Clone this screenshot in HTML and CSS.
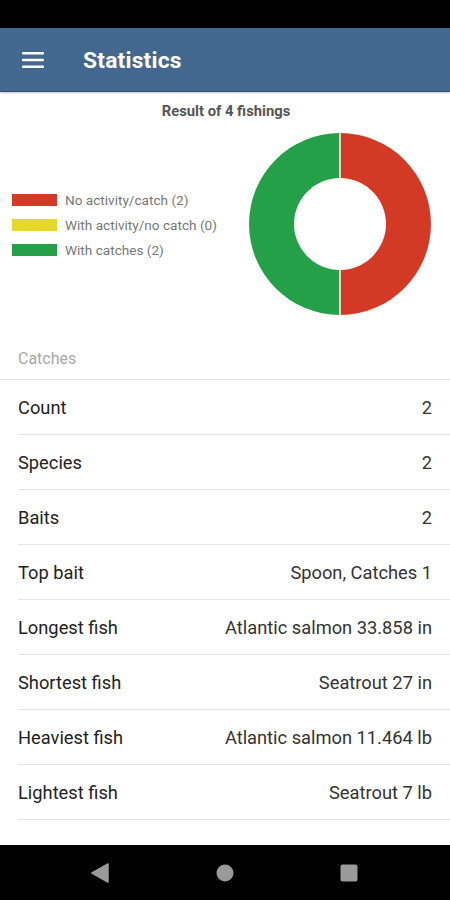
FILE: index.html
```html
<!DOCTYPE html>
<html>
<head>
<meta charset="utf-8">
<link rel="stylesheet" href="styles.css">
</head>
<body>
<div class="screen">
  <div class="statusbar"></div>
  <header class="appbar">
    <svg class="menu" width="22" height="16" viewBox="0 0 22 16"><rect x="0" y="0" width="22" height="2.6" rx="1" fill="#fff"/><rect x="0" y="6.7" width="22" height="2.6" rx="1" fill="#fff"/><rect x="0" y="13.4" width="22" height="2.6" rx="1" fill="#fff"/></svg>
    <h1 class="title">Statistics</h1>
  </header>
  <main class="content">
    <section class="chart">
      <div class="chart-title">Result of 4 fishings</div>
      <div class="chart-body">
        <ul class="legend">
          <li><span class="swatch red"></span>No activity/catch (2)</li>
          <li><span class="swatch yellow"></span>With activity/no catch (0)</li>
          <li><span class="swatch green"></span>With catches (2)</li>
        </ul>
        <svg class="donut" width="184" height="184" viewBox="0 0 184 184">
          <path d="M92 1 A91 91 0 0 1 92 183 L92 138 A46 46 0 0 0 92 46 Z" fill="#d33a26"/>
          <path d="M92 1 A91 91 0 0 0 92 183 L92 138 A46 46 0 0 1 92 46 Z" fill="#24a048"/>
          <line x1="92" y1="0" x2="92" y2="184" stroke="#fff" stroke-width="1.5"/>
        </svg>
      </div>
    </section>
    <div class="section-head">Catches</div>
    <ul class="stats">
      <li><span>Count</span><span>2</span></li>
      <li><span>Species</span><span>2</span></li>
      <li><span>Baits</span><span>2</span></li>
      <li><span>Top bait</span><span>Spoon, Catches 1</span></li>
      <li><span>Longest fish</span><span>Atlantic salmon 33.858 in</span></li>
      <li><span>Shortest fish</span><span>Seatrout 27 in</span></li>
      <li><span>Heaviest fish</span><span>Atlantic salmon 11.464 lb</span></li>
      <li><span>Lightest fish</span><span>Seatrout 7 lb</span></li>
    </ul>
  </main>
  <nav class="navbar">
    <svg width="18" height="20" viewBox="0 0 18 20"><path d="M17 1 L17 19 L1 10 Z" fill="#9a9a9a" stroke="#9a9a9a" stroke-width="1.5" stroke-linejoin="round"/></svg>
    <svg width="18" height="18" viewBox="0 0 18 18"><circle cx="9" cy="9" r="8.5" fill="#9a9a9a"/></svg>
    <svg width="18" height="18" viewBox="0 0 18 18"><rect x="0.5" y="0.5" width="17" height="17" rx="2" fill="#9a9a9a"/></svg>
  </nav>
</div>
</body>
</html>
```
FILE: styles.css
```css
* { box-sizing: border-box; }
html, body { margin: 0; padding: 0; background: #fff; }
body { font-family: Roboto, "Noto Sans", sans-serif; }
.screen { width: 450px; height: 900px; display: flex; flex-direction: column; overflow: hidden; }
.statusbar { height: 28px; background: #000; flex: none; }
.appbar { height: 64px; flex: none; background: #42688f; display: flex; align-items: center; padding-left: 22px; box-shadow: 0 1px 2px rgba(0,0,0,0.25); border-bottom: 1px solid #2f5478; }
.menu { flex: none; }
.title { margin: 2px 0 0 39px; color: #fff; font-size: 22.8px; font-weight: 700; letter-spacing: 0.2px; }
.content { flex: 1; display: flex; flex-direction: column; }
.chart { padding-top: 10px; }
.chart-title { text-align: center; font-size: 14.8px; font-weight: 700; color: #555; padding-left: 2px; line-height: 18px; }
.chart-body { display: flex; align-items: center; justify-content: space-between; padding: 0 18px 0 12px; margin-top: 12px; }
.legend { list-style: none; margin: 0; padding: 0; display: flex; flex-direction: column; gap: 9px; }
.legend li { display: flex; align-items: center; font-size: 13.6px; color: #777; line-height: 16px; }
.swatch { width: 45px; height: 12px; margin-right: 8px; }
.red { background: #d33a26; }
.yellow { background: #e6d829; }
.green { background: #24a048; }
.donut { display: block; margin-bottom: 2px; }
.section-head { font-size: 16px; color: #a8a8a8; padding: 25px 18px 0; line-height: 18px; height: 55px; border-bottom: 1px solid #e2e2e2; margin-top: 7px; }
.stats { list-style: none; margin: 0; padding: 0 0 0 18px; }
.stats li { display: flex; justify-content: space-between; align-items: center; height: 55px; border-bottom: 1px solid #e2e2e2; padding-right: 18px; font-size: 18.3px; color: #222; }
.stats li span:last-child { color: #333; }
.navbar { height: 55px; flex: none; background: #000; display: flex; align-items: center; justify-content: space-between; padding: 0 92px 0 91px; margin-top: auto; }
```
